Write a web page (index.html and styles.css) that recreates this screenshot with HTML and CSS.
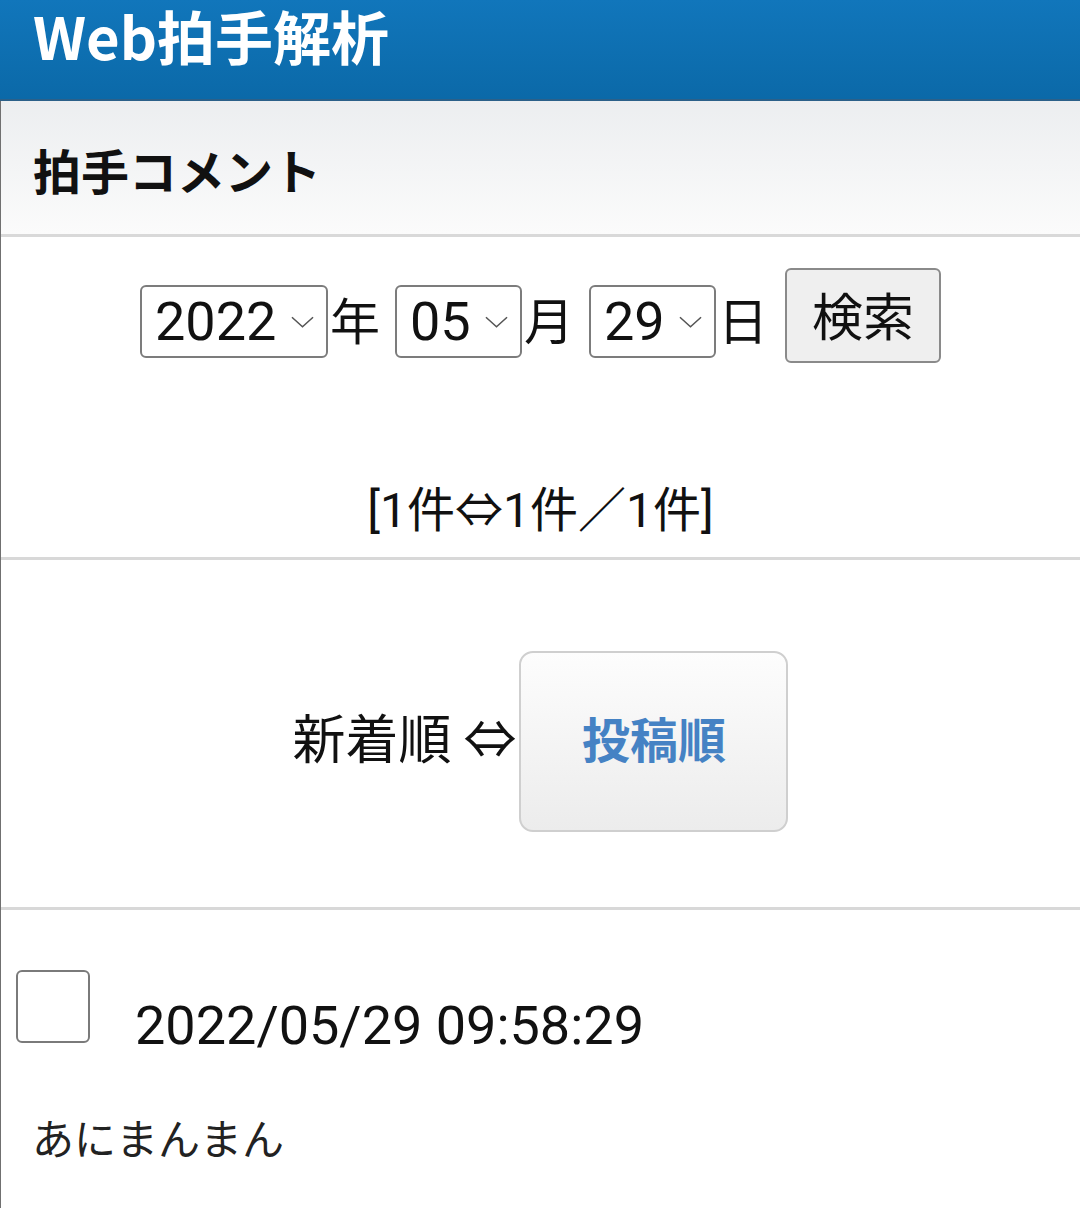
FILE: index.html
```html
<!DOCTYPE html>
<html lang="ja">
<head>
  <meta charset="UTF-8">
  <meta name="viewport" content="width=device-width, initial-scale=1.0">
  <title>Web拍手解析</title>
  <link rel="stylesheet" href="styles.css">
</head>
<body>
  <header class="app-bar">
    <h1>Web拍手解析</h1>
  </header>

  <main class="content">
    <h2 class="section-title">拍手コメント</h2>

    <form class="date-search">
      <span class="select">
        <select name="y">
          <option>2021</option>
          <option selected>2022</option>
        </select>
        <svg class="chevron" viewBox="0 0 24 12"><path d="M1 1 L12 11 L23 1"/></svg>
      </span>
      <span class="unit">年</span>
      <span class="select">
        <select name="m">
          <option>04</option>
          <option selected>05</option>
          <option>06</option>
        </select>
        <svg class="chevron" viewBox="0 0 24 12"><path d="M1 1 L12 11 L23 1"/></svg>
      </span>
      <span class="unit">月</span>
      <span class="select">
        <select name="d">
          <option>28</option>
          <option selected>29</option>
          <option>30</option>
        </select>
        <svg class="chevron" viewBox="0 0 24 12"><path d="M1 1 L12 11 L23 1"/></svg>
      </span>
      <span class="unit">日</span>
      <button type="button" class="search-btn">検索</button>
    </form>

    <p class="count">[1件⇔1件／1件]</p>

    <div class="sort-row">
      <span class="sort-label">新着順 ⇔</span>
      <button type="button" class="sort-btn">投稿順</button>
    </div>

    <div class="comment">
      <label class="comment-head">
        <input type="checkbox" class="check">
        <span class="stamp">2022/05/29 09:58:29</span>
      </label>
      <p class="comment-body">あにまんまん</p>
    </div>
  </main>
</body>
</html>
```

FILE: styles.css
```css
body {
  margin: 0;
  min-height: 100vh;
  display: flex;
  flex-direction: column;
  background: #fff;
  color: #111;
  font-family: Roboto, "Noto Sans CJK JP", sans-serif;
}
.app-bar {
  height: 99px;
  background: linear-gradient(#1176bb, #0b69a8);
  border-bottom: 2px solid #2b6089;
}
.app-bar h1 {
  margin: 0;
  padding: 2px 0 0 33px;
  font-family: "Noto Sans CJK JP", sans-serif;
  font-size: 58px;
  font-weight: 700;
  line-height: 66px;
  color: #fff;
}
.content {
  flex: 1;
  border-left: 1px solid #707070;
}
.section-title {
  margin: 0;
  padding: 44px 32px 41px;
  font-family: "Noto Sans CJK JP", sans-serif;
  font-size: 48px;
  font-weight: 700;
  line-height: 48px;
  background: linear-gradient(#eceef0, #fbfbfb);
  border-bottom: 3px solid #d9d9d9;
}
.date-search {
  display: flex;
  justify-content: center;
  align-items: center;
  padding-top: 31px;
  font-size: 50px;
}
.select {
  display: inline-flex;
  align-items: center;
  height: 69px;
  padding: 0 12px 0 13px;
  border: 2px solid #7c7c7c;
  border-radius: 6px;
  background: #fff;
}
.select select {
  appearance: none;
  -webkit-appearance: none;
  border: none;
  background: transparent;
  padding: 0;
  margin: 0;
  font-family: Roboto, sans-serif;
  font-size: 54px;
  color: #111;
  outline: none;
}
.chevron {
  width: 23px;
  height: 12px;
  margin-left: 14px;
  fill: none;
  stroke: #555;
  stroke-width: 1.6;
}
.unit {
  margin: 0 15px 0 2px;
  padding-bottom: 8px;
  font-family: "Noto Sans CJK JP", sans-serif;
  line-height: 1;
}
.search-btn {
  height: 95px;
  margin: 0 0 12px 2px;
  padding: 0 25px 4px;
  border: 2px solid #8a8a8a;
  border-radius: 6px;
  background: #efefef;
  font-family: "Noto Sans CJK JP", sans-serif;
  font-size: 51px;
  color: #111;
}
.count {
  margin: 112px 0 22px;
  text-align: center;
  font-size: 48px;
  line-height: 48px;
}
.sort-row {
  display: flex;
  justify-content: center;
  align-items: center;
  padding: 91px 0 75px;
  border-top: 3px solid #d8d8d8;
  border-bottom: 3px solid #d8d8d8;
}
.sort-label {
  font-family: "Noto Sans CJK JP", sans-serif;
  font-size: 53px;
  line-height: 53px;
  margin: 0 3px 10px 0;
}
.sort-btn {
  width: 269px;
  height: 181px;
  padding-bottom: 10px;
  border: 2px solid #cfcfcf;
  border-radius: 14px;
  background: linear-gradient(#fdfdfd, #ececec);
  font-family: "Noto Sans CJK JP", sans-serif;
  font-size: 48px;
  font-weight: 700;
  color: #4582c4;
}
.comment {
  padding: 60px 0 0 15px;
}
.comment-head {
  display: flex;
  align-items: flex-end;
}
.check {
  appearance: none;
  -webkit-appearance: none;
  width: 74px;
  height: 73px;
  margin: 0 45px 10px 0;
  border: 2px solid #7a7a7a;
  border-radius: 6px;
  background: #fff;
}
.stamp {
  font-size: 54px;
  line-height: 54px;
}
.comment-body {
  margin: 63px 0 0 16px;
  font-family: "Noto Sans CJK JP", sans-serif;
  font-size: 42px;
  line-height: 42px;
  color: #222;
}
```
